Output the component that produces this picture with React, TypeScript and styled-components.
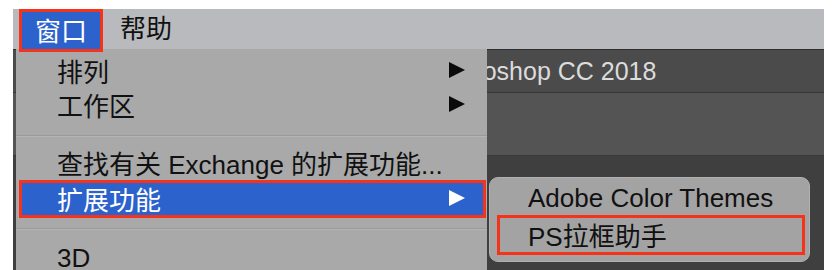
import React from 'react';
import styled, { createGlobalStyle } from 'styled-components';

const GlobalStyle = createGlobalStyle`
    html, body {
        margin: 0;
        padding: 0;
        background: #ffffff;
    }
    body {
        font-family: "Liberation Sans", "Noto Sans CJK SC", sans-serif;
    }
`;

const Page = styled.div`
    width: 835px;
    height: 270px;
    padding: 9px 11px 0 13px;
    box-sizing: border-box;
    overflow: hidden;
`;

const Screen = styled.div`
    position: relative;
    display: flex;
    flex-direction: column;
    width: 811px;
    height: 261px;
    font-size: 26px;
    color: #111;
`;

const MenuBar = styled.div`
    display: flex;
    align-items: center;
    gap: 16px;
    height: 40px;
    padding-left: 6px;
    background: #b9babd;
`;

const MenuTitle = styled.div<{ $active?: boolean }>`
    display: flex;
    align-items: center;
    height: ${(p) => (p.$active ? '43px' : '38px')};
    align-self: flex-start;
    padding: 0 ${(p) => (p.$active ? '13px' : '1px')};
    box-sizing: border-box;
    position: relative;
    z-index: 3;
    background: ${(p) => (p.$active ? '#2c62cc' : 'transparent')};
    border: ${(p) => (p.$active ? '3px solid #f5321a' : 'none')};
    padding-bottom: 3px;
    color: ${(p) => (p.$active ? '#fff' : '#111')};
`;

const Workspace = styled.div`
    flex: 1;
    display: flex;
    flex-direction: column;
    background: #3f3f3f;
`;

const TitleBar = styled.div`
    height: 42px;
    display: flex;
    align-items: center;
    padding-left: 339px;
    background: #4b4b4b;
    border-top: 1px solid #2e2e2e;
    border-bottom: 1px solid #363636;
    color: #dcdcdc;
    font-size: 25px;
    white-space: nowrap;
`;

const OptionsBar = styled.div`
    height: 62px;
    background: #545454;
    border-bottom: 1px solid #3a3a3a;
`;

const Dropdown = styled.div`
    position: absolute;
    top: 40px;
    left: 3px;
    width: 471px;
    bottom: -10px;
    padding-top: 5px;
    box-sizing: border-box;
    background: #a9a9a9;
    z-index: 2;
`;

const Item = styled.div<{ $selected?: boolean }>`
    display: flex;
    align-items: center;
    justify-content: space-between;
    height: ${(p) => (p.$selected ? '38px' : '34px')};
    box-sizing: border-box;
    margin: 0 ${(p) => (p.$selected ? '1px 0 3px' : '0')};
    padding: 0 ${(p) => (p.$selected ? '18px 0 35px' : '22px 0 41px')};
    padding-bottom: 2px;
    background: ${(p) => (p.$selected ? '#2c62cc' : 'transparent')};
    border: ${(p) => (p.$selected ? '3px solid #f5321a' : 'none')};
    color: ${(p) => (p.$selected ? '#fff' : '#111')};
    white-space: nowrap;
`;

const Arrow = styled.span<{ $light?: boolean }>`
    width: 0;
    height: 0;
    border-top: 8px solid transparent;
    border-bottom: 8px solid transparent;
    border-left: 16px solid ${(p) => (p.$light ? '#fff' : '#0a0a0a')};
`;

const Separator = styled.div<{ $top: number; $bottom: number }>`
    height: 1px;
    margin: ${(p) => p.$top}px 0 ${(p) => p.$bottom}px;
    background: #9a9a9a;
    border-bottom: 1px solid #b4b4b4;
`;

const Submenu = styled.div`
    position: absolute;
    top: 168px;
    left: 476px;
    width: 321px;
    height: 85px;
    box-sizing: border-box;
    padding: 5px 4px 0 7px;
    background: #a3a3a3;
    border: 1px solid #b0b0b0;
    border-radius: 9px;
    z-index: 4;
`;

const SubItem = styled.div<{ $marked?: boolean }>`
    display: flex;
    align-items: center;
    height: ${(p) => (p.$marked ? '40px' : '32px')};
    box-sizing: border-box;
    padding-left: ${(p) => (p.$marked ? '28px' : '31px')};
    padding-bottom: 2px;
    border: ${(p) => (p.$marked ? '3px solid #f5321a' : 'none')};
    white-space: nowrap;
`;

export default function App() {
    return (
        <>
            <GlobalStyle />
            <Page>
                <Screen>
                    <MenuBar>
                        <MenuTitle $active>窗口</MenuTitle>
                        <MenuTitle>帮助</MenuTitle>
                    </MenuBar>
                    <Workspace>
                        <TitleBar>Adobe Photoshop CC 2018</TitleBar>
                        <OptionsBar />
                    </Workspace>
                    <Dropdown>
                        <Item>
                            排列
                            <Arrow />
                        </Item>
                        <Item>
                            工作区
                            <Arrow />
                        </Item>
                        <Separator $top={13} $bottom={9} />
                        <Item>查找有关 Exchange 的扩展功能...</Item>
                        <Item $selected>
                            扩展功能
                            <Arrow $light />
                        </Item>
                        <Separator $top={10} $bottom={12} />
                        <Item>3D</Item>
                    </Dropdown>
                    <Submenu>
                        <SubItem>Adobe Color Themes</SubItem>
                        <SubItem $marked>PS拉框助手</SubItem>
                    </Submenu>
                </Screen>
            </Page>
        </>
    );
}
